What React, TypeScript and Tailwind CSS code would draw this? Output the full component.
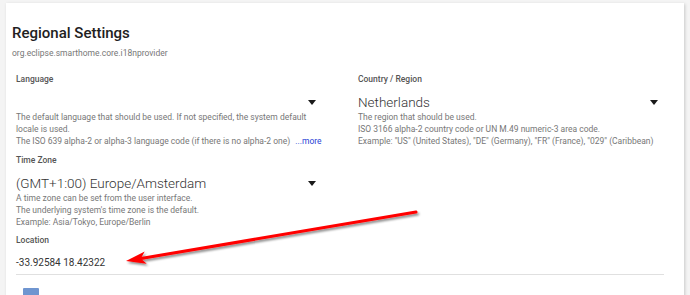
import React, { ReactElement } from 'react';

type SelectFieldProps = {
  label: string;
  value?: string;
  lines: React.ReactNode[];
};

const Caret = (): ReactElement => (
  <svg width="8" height="5" viewBox="0 0 8 5" className="shrink-0">
    <path d="M0 0 L8 0 L4 5 Z" fill="#1a1a1a" />
  </svg>
);

const SelectField = ({ label, value, lines }: SelectFieldProps): ReactElement => {
  return (
    <div className="flex flex-col">
      <div className="h-[12px] text-[8.5px] leading-[12px] font-medium text-[#555]">{label}</div>
      <div className="mt-[8px] flex h-[18px] items-center justify-between pr-[4px]">
        <span className="text-[13.5px] leading-[18px] font-light text-[#333]">{value}</span>
        <Caret />
      </div>
      <div className="text-[8.5px] leading-[12px] text-[#777]">
        {lines.map((line, i) => (
          <div key={i} className="whitespace-nowrap">
            {line}
          </div>
        ))}
      </div>
    </div>
  );
};

const Pointer = (): ReactElement => (
  <svg
    className="pointer-events-none absolute left-0 top-0"
    width="690"
    height="295"
    viewBox="0 0 690 295"
  >
    <defs>
      <filter id="arrow-shadow" x="-10%" y="-50%" width="120%" height="200%">
        <feDropShadow dx="1.5" dy="2" stdDeviation="1.2" floodColor="#000" floodOpacity="0.45" />
      </filter>
    </defs>
    <g filter="url(#arrow-shadow)">
      <line x1="416" y1="212" x2="141" y2="258.5" stroke="#ff0000" strokeWidth="3" strokeLinecap="round" />
      <path d="M126 261 L144.7 251.6 L140.8 258.5 L146.7 263.8 Z" fill="#ff0000" />
    </g>
  </svg>
);

const App = (): ReactElement => {
  return (
    <div
      className="relative h-[295px] w-[690px] overflow-hidden bg-[#f4f4f4] pl-[6px] pr-[6px] pt-[3px]"
      style={{ fontFamily: 'Roboto, "Noto Sans", sans-serif' }}
    >
      <div className="h-[320px] bg-white pl-[6px] pt-[20px] shadow-[1px_1px_3px_rgba(0,0,0,0.18)]">
        <h1 className="text-[15px] leading-[20px] font-medium text-[#212121]">Regional Settings</h1>
        <div className="mt-[4px] text-[8.5px] leading-[12px] text-[#777]">
          org.eclipse.smarthome.core.i18nprovider
        </div>

        <div className="mt-[14px] w-[652px] pl-[4px]">
          <div className="grid grid-cols-[304px_304px] gap-x-[38px]">
            <SelectField
              label="Language"
              lines={[
                'The default language that should be used. If not specified, the system default',
                'locale is used.',
                <>
                  The ISO 639 alpha-2 or alpha-3 language code (if there is no alpha-2 one){' '}
                  <span className="ml-[3px] text-[#2a3fd6]">...more</span>
                </>,
              ]}
            />
            <SelectField
              label="Country / Region"
              value="Netherlands"
              lines={[
                'The region that should be used.',
                'ISO 3166 alpha-2 country code or UN M.49 numeric-3 area code.',
                'Example: "US" (United States), "DE" (Germany), "FR" (France), "029" (Caribbean)',
              ]}
            />
          </div>

          <div className="mt-[7px] w-[304px]">
            <SelectField
              label="Time Zone"
              value="(GMT+1:00) Europe/Amsterdam"
              lines={[
                'A time zone can be set from the user interface.',
                "The underlying system's time zone is the default.",
                'Example: Asia/Tokyo, Europe/Berlin',
              ]}
            />
          </div>

          <div className="mt-[6px]">
            <div className="h-[12px] text-[8.5px] leading-[12px] font-medium text-[#555]">Location</div>
            <div className="mt-[11px] border-b border-[#e0e0e0] pb-[5px] text-[10px] leading-[12px] text-[#333]">
              -33.92584 18.42322
            </div>
          </div>

          <div className="ml-[7px] mt-[13px] h-[16px] w-[16px] rounded-[1px] bg-[#6f95d0]" />
        </div>
      </div>
      <Pointer />
    </div>
  );
};

export default App;
